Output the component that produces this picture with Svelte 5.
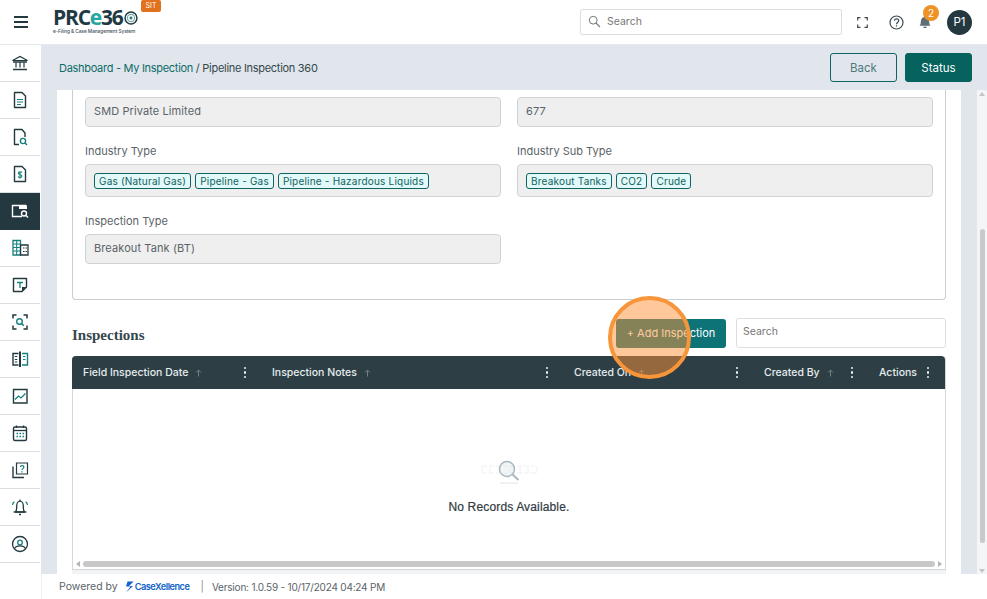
<script>
  const D = '#24393f';
  const T = '#17807f';
  const icons = [
    `<path d="M2.5 7.5 10 3.5l7.5 4z" fill="none" stroke="${D}" stroke-width="1.2"/><path d="M6 9.5v5M10 9.5v5M14 9.5v5" stroke="${D}" stroke-width="1.2"/><path d="M3 9h14M3 16.5h14" stroke="${D}" stroke-width="1.3"/>`,
    `<path d="M4.5 2.5h7.5l3.5 3.5v11.5h-11z" fill="none" stroke="${D}" stroke-width="1.4" stroke-linejoin="round"/><path d="M7 9.5h6M7 12h6M7 14.5h4" stroke="${T}" stroke-width="1.2"/>`,
    `<path d="M9 17.5H4.5v-15H12l3 3.500v4" fill="none" stroke="${D}" stroke-width="1.4" stroke-linejoin="round"/><circle cx="13" cy="14" r="2.600" fill="none" stroke="${T}" stroke-width="1.400"/><path d="m15 16 2 2" stroke="${T}" stroke-width="1.500"/>`,
    `<path d="M4.500 2.500H12l3.500 3.500v11.500h-11z" fill="none" stroke="${D}" stroke-width="1.400" stroke-linejoin="round"/><path d="M12 8.500c-.5-1-3.500-1.200-3.700.500-.2 2 3.800 1 3.600 3.200-.2 1.600-3.300 1.500-3.900.3M10 7.300v7.400" fill="none" stroke="${T}" stroke-width="1.100"/>`,
    `<path d="M12 15.500H2.500v-11h13v3" fill="none" stroke="#fff" stroke-width="1.400"/><path d="M9 4.500h8v3.500H9z" fill="#fff"/><circle cx="14" cy="12.500" r="2.500" fill="none" stroke="#fff" stroke-width="1.400"/><path d="m16 14.500 2 2" stroke="#fff" stroke-width="1.500"/>`,
    `<path d="M3 2.500h7.500v14.500H3z" fill="none" stroke="${T}" stroke-width="1.300"/><path d="M10.500 7H18v10h-7.500z" fill="none" stroke="${D}" stroke-width="1.300"/><path d="M3 6h7.500M3 9.500h7.500M3 13h7.500M6.700 2.500V17" stroke="${T}" stroke-width="1.100"/><path d="M13 10h1.500M15.500 10H17M13 13.500h1.500M15.500 13.500H17" stroke="${D}" stroke-width="1.200"/>`,
    `<path d="M3.500 3.500h13V12l-4.500 4.500H3.500z" fill="none" stroke="${D}" stroke-width="1.400" stroke-linejoin="round"/><path d="M12 16.500V12h4.500z" fill="${D}"/><path d="M7 7.500h6M10 7.500V13" stroke="${T}" stroke-width="1.300"/>`,
    `<path d="M3 6.500V3h3.500M13.500 3H17v3.500M17 13.500V17h-3.500M6.500 17H3v-3.500" fill="none" stroke="${D}" stroke-width="1.500"/><circle cx="9.500" cy="9.500" r="2.800" fill="none" stroke="${T}" stroke-width="1.400"/><path d="m11.500 11.500 2.300 2.300" stroke="${T}" stroke-width="1.500"/>`,
    `<path d="M8.500 4.500H3v11.500h5.500" fill="none" stroke="${D}" stroke-width="1.400"/><path d="M12 4.500h5.500V16H12" fill="none" stroke="${T}" stroke-width="1.400"/><path d="M10 2.500v15.500" stroke="${D}" stroke-width="2"/><path d="M4.800 7.500h2.500M4.800 10.500h2.500M4.800 13h2.500" stroke="${D}" stroke-width="1.100"/><path d="M13 7.500h2.500M13 10.500h2.500" stroke="${T}" stroke-width="1.100"/>`,
    `<path d="M3.500 3.500h13.500v13.500H3.500z" fill="none" stroke="${D}" stroke-width="1.400"/><path d="m5 13.500 3.500-3.500 2.500 2 4.500-4.500" fill="none" stroke="${T}" stroke-width="1.300"/>`,
    `<rect x="3.500" y="4" width="13" height="13.500" rx="1.500" fill="none" stroke="${D}" stroke-width="1.400"/><path d="M3.500 7.500h13" stroke="${D}" stroke-width="1.300"/><path d="M6.500 2.500V5M13.500 2.500V5" stroke="${D}" stroke-width="1.300"/><path d="M6.500 10.500h1.500M9.500 10.500H11M12.500 10.500H14M6.500 13.500h1.500M9.500 13.500H11M12.500 13.500H14" stroke="${T}" stroke-width="1.400"/>`,
    `<path d="M6.500 3h11v11h-11z" fill="none" stroke="${D}" stroke-width="1.200"/><path d="M3 6.500V17.500h11" fill="none" stroke="${D}" stroke-width="1.400"/><path d="M10.300 7c.2-2 3.600-1.900 3.600.1 0 1.500-1.900 1.500-1.900 3" fill="none" stroke="${T}" stroke-width="1.200"/><path d="M12 11.200v1.300" stroke="${T}" stroke-width="1.200"/>`,
    `<path d="M5.500 15c1.300-1.500 1.200-3 1.200-6 0-2.500 1.300-4.800 3.300-4.800s3.300 2.300 3.300 4.800c0 3-.1 4.500 1.200 6z" fill="none" stroke="${D}" stroke-width="1.300" stroke-linejoin="round"/><path d="M3.500 15h13" stroke="${D}" stroke-width="1.300"/><path d="M9 17.500h2" stroke="${D}" stroke-width="1.400"/><path d="M10 2.500v2" stroke="${D}" stroke-width="1.200"/><path d="M2.500 8c.2-1.500.8-2.500 1.800-3.300M17.500 8c-.2-1.500-.8-2.500-1.800-3.300" fill="none" stroke="${T}" stroke-width="1.200"/>`,
    `<circle cx="10" cy="10" r="7.500" fill="none" stroke="${D}" stroke-width="1.300"/><circle cx="10" cy="8.500" r="2.300" fill="none" stroke="${T}" stroke-width="1.300"/><path d="M4.500 14.500c1-2 3-2.700 5.500-2.700s4.500.7 5.500 2.700" fill="none" stroke="${D}" stroke-width="1.300"/>`
  ];
  const columns = [
    { label: 'Field Inspection Date', sort: true },
    { label: 'Inspection Notes', sort: true },
    { label: 'Created On', sort: true },
    { label: 'Created By', sort: true },
    { label: 'Actions', sort: false }
  ];
</script>

<div class="page">
  <header class="topbar">
    <button class="burger" aria-label="Menu"><span></span><span></span><span></span></button>
    <div class="logo">
      <div class="logo-mark">
        <span class="dark">PRC</span><span class="teal">e</span><span class="dark">36</span>
        <svg width="14" height="14" viewBox="0 0 17 17"><circle cx="8.500" cy="8.500" r="7.200" fill="none" stroke="#24393f" stroke-width="1.800"/><circle cx="8.500" cy="8.500" r="4.400" fill="none" stroke="#7fa6a8" stroke-width="1.400"/><circle cx="8.500" cy="8.500" r="1.800" fill="#17807f"/></svg>
      </div>
      <div class="tagline">e-Filing &amp; Case Management System</div>
      <span class="sit">SIT</span>
    </div>
    <div class="top-right">
      <div class="global-search">
        <svg width="13" height="13" viewBox="0 0 13 13"><circle cx="5.200" cy="5.200" r="3.900" fill="none" stroke="#777" stroke-width="1"/><path d="m8 8 4 4" stroke="#777" stroke-width="1.100"/></svg>
        <span>Search</span>
      </div>
      <svg class="fs" width="11" height="11" viewBox="0 0 11 11"><path d="M.7 3.500V.7h2.800M7.500.7h2.800v2.800M10.300 7.500v2.800H7.500M3.500 10.300H.7V7.500" fill="none" stroke="#3c4a50" stroke-width="1.200"/></svg>
      <svg class="help" width="15" height="15" viewBox="0 0 15 15"><circle cx="7.500" cy="7.500" r="6.500" fill="none" stroke="#3c4a50" stroke-width="1.200"/><path d="M5.400 5.800c.2-2.500 4.300-2.400 4.300 0 0 1.700-2.200 1.600-2.200 3.400" fill="none" stroke="#3c4a50" stroke-width="1.200"/><path d="M7.500 10.300v1.300" stroke="#3c4a50" stroke-width="1.200"/></svg>
      <div class="bell">
        <svg width="14" height="14" viewBox="0 0 14 14"><path d="M1.500 10.800c1-1.200 1.300-2.300 1.300-4.300C2.800 4 4.500 2 7 2s4.200 2 4.200 4.500c0 2 .3 3.100 1.300 4.300z" fill="#5f6e74"/><path d="M5.500 12.300h3" stroke="#5f6e74" stroke-width="1.400"/></svg>
        <span class="badge">2</span>
      </div>
      <div class="avatar">P1</div>
    </div>
  </header>

  <div class="body">
    <nav class="sidebar">
      {#each icons as icon, i}
        <div class="nav-item" class:active={i === 4}>
          <svg width="20" height="20" viewBox="0 0 20 20">{@html icon}</svg>
        </div>
      {/each}
    </nav>

    <main class="main">
      <div class="crumbs-row">
        <div class="crumbs"><span class="link">Dashboard - My Inspection</span> / Pipeline Inspection 360</div>
        <div class="actions">
          <button class="btn-back">Back</button>
          <button class="btn-status">Status</button>
        </div>
      </div>

      <div class="scroll-area">
        <section class="panel">
          <div class="card">
            <div class="form-grid">
              <div class="field">
                <div class="input">SMD Private Limited</div>
              </div>
              <div class="field">
                <div class="input">677</div>
              </div>
              <div class="field">
                <div class="label">Industry Type</div>
                <div class="input chips">
                  <span class="chip">Gas (Natural Gas)</span>
                  <span class="chip">Pipeline - Gas</span>
                  <span class="chip">Pipeline - Hazardous Liquids</span>
                </div>
              </div>
              <div class="field">
                <div class="label">Industry Sub Type</div>
                <div class="input chips">
                  <span class="chip">Breakout Tanks</span>
                  <span class="chip">CO2</span>
                  <span class="chip">Crude</span>
                </div>
              </div>
              <div class="field">
                <div class="label">Inspection Type</div>
                <div class="input">Breakout Tank (BT)</div>
              </div>
            </div>
          </div>

          <div class="section-head">
            <h2>Inspections</h2>
            <button class="btn-add">+ Add Inspection</button>
            <div class="table-search">Search</div>
          </div>

          <div class="table">
            <div class="thead">
              {#each columns as col}
                <div class="th">
                  <span class="th-label">{col.label}</span>
                  {#if col.sort}
                    <svg class="sort" width="7" height="8" viewBox="0 0 7 8"><path d="M3.500 7.500V1M1 3.500 3.500 1 6 3.500" fill="none" stroke="#6f8288" stroke-width="1"/></svg>
                  {/if}
                  <span class="dots"><i></i><i></i><i></i></span>
                </div>
              {/each}
            </div>
            <div class="tbody">
              <svg class="empty-icon" width="60" height="28" viewBox="0 0 60 28">
                <path d="M2 8h55M2 15h55" stroke="#edf0f3" stroke-width="1" stroke-dasharray="5 2"/>
                <path d="M2 8v7M10 8v7M20 8v7M30 8v7M40 8v7M48 8v7M57 8v7" stroke="#edf0f3" stroke-width="1"/>
                <circle cx="27" cy="11" r="7.500" fill="rgba(225,232,236,.45)" stroke="#a9b8c0" stroke-width="1.500"/>
                <path d="m32.500 16.500 6 5.500" stroke="#a9b8c0" stroke-width="2"/>
                <path d="M20 25h18" stroke="#dfe5e8" stroke-width="1"/>
              </svg>
              <div class="empty-text">No Records Available.</div>
            </div>
            <div class="hscroll">
              <span class="arrow-l"></span>
              <span class="hthumb"></span>
              <span class="arrow-r"></span>
            </div>
          </div>
          <div class="table-foot"></div>

          <div class="spot" aria-hidden="true"></div>
        </section>

        <div class="vscroll">
          <span class="arrow-u"></span>
          <span class="vthumb"></span>
          <span class="arrow-d"></span>
        </div>
      </div>

      <footer class="footer">
        <span>Powered by</span>
        <span class="cx">
          <svg width="9" height="12" viewBox="0 0 9 12"><path d="M8.500.5H2.500L1 5.500h4.500L1 11.500l7-6.500H4z" fill="#0f62c9"/></svg>
          <span class="cx-name">CaseXellence</span>
        </span>
        <span class="sep">|</span>
        <span class="version">Version: 1.0.59 - 10/17/2024 04:24 PM</span>
      </footer>
    </main>
  </div>
</div>

<style>
  :global(body) {
    margin: 0;
    background: #fff;
  }
  .page {
    width: 987px;
    height: 599px;
    display: flex;
    flex-direction: column;
    overflow: hidden;
    font-family: "Inter", "Liberation Sans", sans-serif;
    font-size: 11px;
    color: #4b5559;
  }
  button {
    font: inherit;
    cursor: pointer;
  }

  /* top bar */
  .topbar {
    height: 45px;
    flex: none;
    display: flex;
    align-items: center;
    background: #fff;
    box-sizing: border-box;
    border-bottom: 1px solid #e6e9ec;
  }
  .burger {
    width: 14px;
    height: 12px;
    margin-left: 14px;
    padding: 0;
    background: none;
    border: 0;
    display: flex;
    flex-direction: column;
    justify-content: space-between;
  }
  .burger span {
    display: block;
    height: 2px;
    background: #24393f;
  }
  .logo {
    position: relative;
    margin-left: 25px;
    width: 90px;
    height: 34px;
  }
  .logo-mark {
    display: flex;
    align-items: center;
    font-family: "Open Sans", sans-serif;
    font-weight: 700;
    font-size: 21px;
    line-height: 22px;
    letter-spacing: -1.2px;
    height: 22px;
    margin-top: 1px;
  }
  .logo-mark svg {
    margin-left: 1px;
    margin-top: 2px;
  }
  .dark {
    color: #1f3a44;
  }
  .teal {
    color: #25a5a0;
  }
  .tagline {
    font-size: 4.800px;
    line-height: 6px;
    white-space: nowrap;
    color: #3d5058;
    font-weight: 500;
    letter-spacing: -0.07px;
  }
  .sit {
    position: absolute;
    left: 88px;
    top: -5px;
    width: 20px;
    height: 12px;
    box-sizing: border-box;
    padding-top: 1px;
    border-radius: 2px;
    background: #e2711d;
    color: #fff;
    font-size: 7px;
    line-height: 10px;
    text-align: center;
  }
  .top-right {
    margin-left: auto;
    display: flex;
    align-items: center;
  }
  .global-search {
    width: 262px;
    height: 26px;
    box-sizing: border-box;
    border: 1px solid #dcdfe2;
    border-radius: 2px;
    display: flex;
    align-items: center;
    gap: 6px;
    padding: 0 0 2px 7px;
    color: #777;
    font-size: 10.500px;
  }
  .fs {
    margin-left: 15px;
  }
  .help {
    margin-left: 21px;
  }
  .bell {
    position: relative;
    margin-left: 14px;
    width: 14px;
    height: 14px;
  }
  .badge {
    position: absolute;
    left: 5px;
    top: -10px;
    width: 16px;
    height: 16px;
    border-radius: 50%;
    background: #ee9226;
    color: #fff;
    font-size: 10px;
    line-height: 16px;
    text-align: center;
  }
  .avatar {
    width: 25px;
    height: 25px;
    margin: 0 15px 0 15px;
    border-radius: 50%;
    background: #24393f;
    color: #fff;
    font-size: 11.500px;
    line-height: 25px;
    text-align: center;
  }

  /* layout */
  .body {
    flex: 1;
    min-height: 0;
    display: flex;
  }
  .sidebar {
    width: 40px;
    flex: none;
    background: #fff;
    margin-right: 1px;
  }
  .nav-item {
    height: 37px;
    box-sizing: border-box;
    border-bottom: 1px solid #dcdfe2;
    display: flex;
    align-items: center;
    justify-content: center;
  }
  .nav-item.active {
    background: #24393f;
    border-bottom-color: #24393f;
  }
  .main {
    flex: 1;
    min-width: 0;
    display: flex;
    flex-direction: column;
    background: #e0e6ec;
  }
  .crumbs-row {
    height: 45px;
    flex: none;
    display: flex;
    align-items: center;
    justify-content: space-between;
    padding: 0 15px 0 18px;
    box-sizing: border-box;
  }
  .crumbs {
    font-size: 11px;
    color: #35474d;
    letter-spacing: -0.29px;
  }
  .link {
    color: #0f6b6a;
  }
  .actions {
    display: flex;
    gap: 8px;
  }
  .btn-back,
  .btn-status {
    width: 67px;
    height: 29px;
    border-radius: 3px;
    font-size: 11.500px;
    padding: 0;
  }
  .btn-back {
    background: transparent;
    border: 1px solid #0d6461;
    color: #4f7a7c;
  }
  .btn-status {
    background: #05625d;
    border: 1px solid #05625d;
    color: #fff;
  }

  .scroll-area {
    flex: 1;
    min-height: 0;
    display: flex;
    justify-content: space-between;
  }
  .panel {
    position: relative;
    width: 904px;
    margin-left: 16px;
    box-sizing: border-box;
    padding: 0 15px;
    background: #fff;
    overflow: hidden;
  }
  .card {
    height: 210px;
    box-sizing: border-box;
    border: 1px solid #c9ced2;
    border-top: 0;
    border-radius: 0 0 4px 4px;
    padding: 7px 12px 0;
  }
  .form-grid {
    display: grid;
    grid-template-columns: 416px 416px;
    column-gap: 16px;
  }
  .field {
    min-width: 0;
  }
  .label {
    height: 14px;
    line-height: 14px;
    margin: 17px 0 6px;
    color: #5a6367;
    font-size: 11px;
  }
  .input {
    height: 30px;
    box-sizing: border-box;
    border: 1px solid #cfd3d6;
    border-radius: 4px;
    background: #efefef;
    padding: 0 8px 2px;
    display: flex;
    align-items: center;
    color: #5a6367;
    font-size: 11px;
    letter-spacing: 0.1px;
  }
  .input.chips {
    height: 33px;
    gap: 4px;
    padding: 0 8px;
  }
  .chip {
    height: 16px;
    box-sizing: border-box;
    padding: 0 4px;
    border: 1px solid #0d6461;
    border-radius: 3px;
    background: #e3f8f8;
    color: #0d6461;
    font-size: 10px;
    letter-spacing: 0.2px;
    line-height: 14px;
    white-space: nowrap;
  }
  .section-head {
    height: 30px;
    margin-top: 18px;
    display: flex;
    align-items: center;
  }
  .section-head h2 {
    margin: 5px auto 0 0;
    font-family: "Liberation Serif", serif;
    font-size: 15px;
    font-weight: 700;
    color: #35474d;
  }
  .btn-add {
    width: 110px;
    height: 29px;
    border: 0;
    border-radius: 3px;
    background: #0d7377;
    color: #fff;
    font-size: 11px;
    padding: 0;
  }
  .table-search {
    width: 210px;
    height: 30px;
    margin-left: 10px;
    box-sizing: border-box;
    border: 1px solid #dcdfe2;
    border-radius: 3px;
    padding: 0 6px;
    line-height: 26px;
    color: #777;
    font-size: 10.500px;
  }
  .table {
    margin-top: 8px;
    height: 214px;
    box-sizing: border-box;
    border: 1px solid #d3d7da;
    border-top: 0;
    display: flex;
    flex-direction: column;
    border-radius: 4px 4px 0 0;
  }
  .table-foot {
    height: 5px;
    background: #f1f3f5;
  }
  .thead {
    height: 33px;
    flex: none;
    margin: 0 -1px 0 -1px;
    background: #2d3f45;
    border-radius: 4px 4px 0 0;
    display: grid;
    grid-template-columns: 190px 302px 190px 115px 76px;
    width: 873px;
  }
  .th {
    display: flex;
    align-items: center;
    padding: 0 16px 0 10px;
    color: #e6ecee;
    font-size: 10.500px;
    font-weight: 500;
    min-width: 0;
  }
  .th:first-child {
    padding-left: 11px;
  }
  .th-label {
    white-space: nowrap;
  }
  .sort {
    margin-left: 7px;
  }
  .dots {
    margin-left: auto;
    display: flex;
    flex-direction: column;
    gap: 2px;
  }
  .dots i {
    display: block;
    width: 2.500px;
    height: 2.500px;
    border-radius: 50%;
    background: #eef2f3;
  }
  .tbody {
    flex: 1;
    min-height: 0;
    display: flex;
    flex-direction: column;
    align-items: center;
  }
  .empty-icon {
    margin-top: 69px;
    margin-left: 2px;
  }
  .empty-text {
    margin-top: 14px;
    font-family: "Liberation Sans", sans-serif;
    font-size: 12px;
    font-weight: 500;
    color: #2f3a42;
    letter-spacing: 0.15px;
    -webkit-text-stroke: 0.2px #2f3a42;
  }
  .hscroll {
    height: 9px;
    margin-bottom: 1px;
    flex: none;
    display: flex;
    align-items: center;
    padding: 0 3px;
    gap: 3px;
  }
  .hthumb {
    flex: 1;
    height: 6px;
    border-radius: 3px;
    background: #c8c8c8;
  }
  .arrow-l,
  .arrow-r,
  .arrow-u,
  .arrow-d {
    display: block;
    width: 0;
    height: 0;
    border: 3.500px solid transparent;
  }
  .arrow-l {
    border-left: 0;
    border-right: 4px solid #b5b5b5;
  }
  .arrow-r {
    border-right: 0;
    border-left: 4px solid #b5b5b5;
  }
  .spot {
    position: absolute;
    left: 551px;
    top: 206px;
    width: 83px;
    height: 83px;
    box-sizing: border-box;
    border: 4px solid #f7953a;
    border-radius: 50%;
    background: rgba(253, 146, 56, 0.5);
  }

  .vscroll {
    width: 10px;
    background: #f4f5f6;
    display: flex;
    flex-direction: column;
    align-items: center;
    padding-top: 2px;
    box-sizing: border-box;
  }
  .vthumb {
    width: 5px;
    height: 314px;
    margin-top: 133px;
    border-radius: 3px;
    background: #c9c9c9;
  }
  .arrow-u {
    border-top: 0;
    border-bottom: 4px solid #c4c4c4;
  }
  .arrow-d {
    margin-top: auto;
    margin-bottom: 1px;
    border-bottom: 0;
    border-top: 4px solid #c4c4c4;
  }

  .footer {
    height: 25px;
    flex: none;
    background: #fff;
    border-left: 1px solid #eceef0;
    box-sizing: border-box;
    padding-left: 17px;
    display: flex;
    align-items: center;
    color: #5a6367;
    font-size: 10.500px;
  }
  .cx {
    display: flex;
    align-items: center;
    margin-left: 7px;
    gap: 1px;
  }
  .cx-name {
    color: #0f62c9;
    font-weight: 600;
    font-size: 9.200px;
    letter-spacing: -0.5px;
  }
  .sep {
    margin: 0 8px 0 11px;
    color: #8a9195;
  }
  .version {
    font-size: 10px;
    letter-spacing: -0.2px;
  }
</style>
